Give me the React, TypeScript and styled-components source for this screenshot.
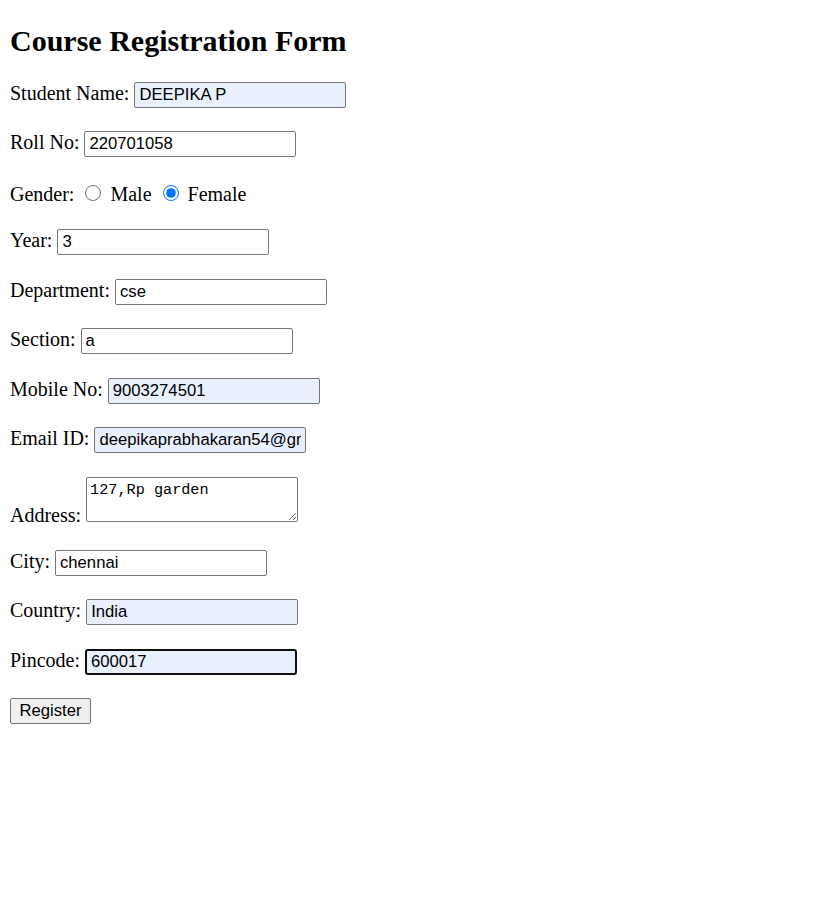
import React from "react";
import styled, { createGlobalStyle } from "styled-components";

const Global = createGlobalStyle`
  html, body { background: #fff; }
  body {
    margin: 10px;
    font-family: "Liberation Serif", "Times New Roman", serif;
    font-size: 20px;
    color: #000;
  }
`;

const Title = styled.h1`
  font-size: 30px;
  font-weight: bold;
  margin: 14px 0 24px;
`;

const Form = styled.form`
  margin: 0;
`;

const Row = styled.p`
  margin: 23.45px 0;
  line-height: normal;
`;

const TextInput = styled.input<{ $filled?: boolean; $focused?: boolean }>`
  box-sizing: border-box;
  width: 212px;
  height: 26px;
  padding: 1px 4px;
  margin: 0;
  font-family: "Liberation Sans", Arial, sans-serif;
  font-size: 16.67px;
  color: #000;
  background: ${(p) => (p.$filled ? "#e8f0fe" : "#fff")};
  border: ${(p) => (p.$focused ? "2px solid #101010" : "1px solid #767676")};
  border-radius: ${(p) => (p.$focused ? "3px" : "2px")};
  outline: none;
  vertical-align: baseline;
`;

const Area = styled.textarea`
  box-sizing: border-box;
  width: 212px;
  height: 45px;
  padding: 3px 3px 2px;
  margin: 0;
  font-family: "Liberation Mono", "DejaVu Sans Mono", monospace;
  font-size: 15.2px;
  line-height: 1.2;
  color: #000;
  background: #fff;
  border: 1px solid #767676;
  border-radius: 2px;
  resize: both;
  vertical-align: baseline;
`;

const Radio = styled.input`
  margin: 4px 4px 0 6px;
  width: 16px;
  height: 16px;
  accent-color: #0075ff;
  vertical-align: baseline;
`;

const Button = styled.button`
  box-sizing: border-box;
  width: 81px;
  height: 26px;
  padding: 1px 7px;
  font-family: "Liberation Sans", Arial, sans-serif;
  font-size: 16.67px;
  color: #000;
  background: #efefef;
  border: 1px solid #767676;
  border-radius: 2px;
`;

export default function App() {
  return (
    <>
      <Global />
      <Title>Course Registration Form</Title>
      <Form onSubmit={(e) => e.preventDefault()}>
        <Row>
          Student Name: <TextInput $filled defaultValue="DEEPIKA P" />
        </Row>
        <Row>
          Roll No: <TextInput defaultValue="220701058" />
        </Row>
        <Row>
          Gender: <Radio type="radio" name="g" /> Male{" "}
          <Radio type="radio" name="g" defaultChecked /> Female
        </Row>
        <Row>
          Year: <TextInput defaultValue="3" />
        </Row>
        <Row>
          Department: <TextInput defaultValue="cse" />
        </Row>
        <Row>
          Section: <TextInput defaultValue="a" />
        </Row>
        <Row>
          Mobile No: <TextInput $filled defaultValue="9003274501" />
        </Row>
        <Row>
          Email ID: <TextInput $filled defaultValue="deepikaprabhakaran54@gmail.com" />
        </Row>
        <Row>
          Address: <Area defaultValue="127,Rp garden" />
        </Row>
        <Row>
          City: <TextInput defaultValue="chennai" />
        </Row>
        <Row>
          Country: <TextInput $filled defaultValue="India" />
        </Row>
        <Row>
          Pincode: <TextInput $filled $focused defaultValue="600017" />
        </Row>
        <Row>
          <Button type="submit">Register</Button>
        </Row>
      </Form>
    </>
  );
}
